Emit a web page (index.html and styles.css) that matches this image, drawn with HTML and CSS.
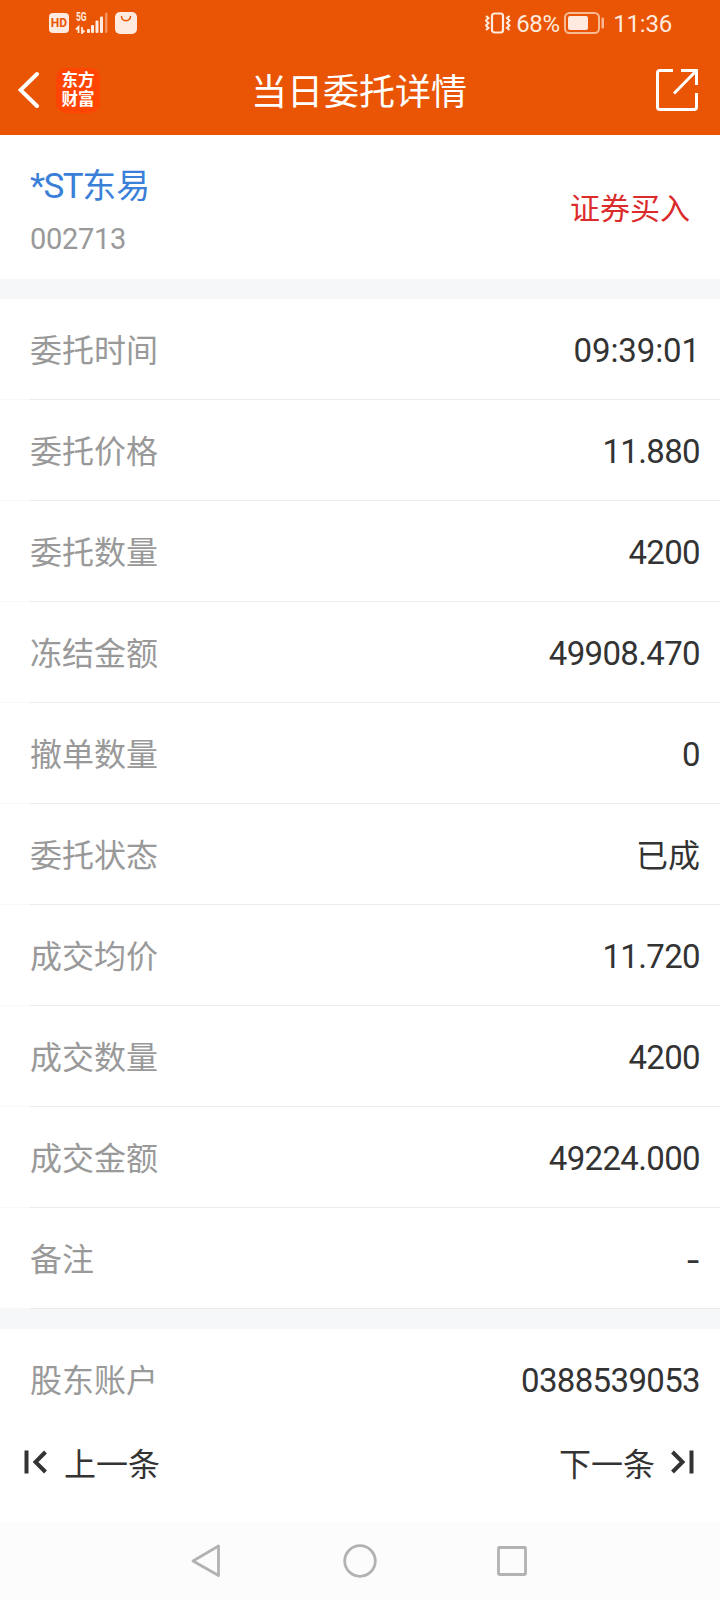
FILE: index.html
```html
<!DOCTYPE html>
<html lang="zh-CN">
  <head>
    <meta charset="UTF-8" />
    <meta name="viewport" content="width=device-width, initial-scale=1.0" />
    <title>当日委托详情</title>
    <link rel="stylesheet" href="styles.css">
  </head>

  <body>
    <header class="header">
      <div class="status-bar">
        <div class="status-left">
          <span class="hd">HD</span>
          <div class="signal">
            <span class="net">5G</span>
            <svg width="34" height="22" viewBox="0 0 34 22">
              <g fill="none" stroke="#ffeadf" stroke-width="1.800">
                <path d="M1 17.500L3.500 15V21M7 15V21L9.500 18.500" />
              </g>
              <g fill="#ffeadf">
                <rect x="12" y="17" width="3" height="4" rx="1" />
                <rect x="16" y="13" width="3" height="8" rx="1" />
                <rect x="20.500" y="8.500" width="3" height="12.500" rx="1" />
                <rect x="25" y="4.500" width="3" height="16.500" rx="1" />
                <rect x="30" y="0.500" width="2.500" height="20.500" rx="1" opacity="0.4" />
              </g>
            </svg>
          </div>
          <svg class="bag" width="22" height="22" viewBox="0 0 22 22">
            <rect width="22" height="22" rx="5" fill="#ffeadf" />
            <path d="M6.500 4.500C7 10 15 10 15.500 4.500" fill="none" stroke="#e95504" stroke-width="1.500" stroke-linecap="round" />
          </svg>
        </div>
        <div class="status-right">
          <svg width="26" height="22" viewBox="0 0 26 22">
            <g fill="none" stroke="#ffeadf">
              <rect x="7" y="1.500" width="11" height="19" rx="2.500" stroke-width="2.200" />
              <path d="M1 4L3.500 6L1 8.500L3.500 11L1 13.500L3.500 16L1 18M24.500 4L22 6L24.500 8.500L22 11L24.500 13.500L22 16L24.500 18" stroke-width="2" />
            </g>
          </svg>
          <span class="percent">68%</span>
          <svg class="battery" width="41" height="22" viewBox="0 0 41 22">
            <rect x="1" y="1" width="34" height="20" rx="4.500" fill="none" stroke="#f8b995" stroke-width="2" />
            <rect x="4" y="4" width="20" height="14" rx="2" fill="#ffeadf" />
            <rect x="37.500" y="5.500" width="2.500" height="11" rx="1.200" fill="#f8b995" />
          </svg>
          <span class="clock">11:36</span>
        </div>
      </div>
      <div class="nav-bar">
        <div class="nav-left">
          <svg width="22" height="38" viewBox="0 0 22 38">
            <path d="M19 3L2.500 19L19 35" fill="none" stroke="#fff" stroke-width="4" stroke-linecap="round" />
          </svg>
          <div class="logo"><span>东方</span><span>财富</span></div>
        </div>
        <h1 class="title">当日委托详情</h1>
        <svg class="share" width="42" height="42" viewBox="0 0 42 42">
          <g fill="none" stroke="#fff" stroke-width="3">
            <path d="M17 1.500H4Q1.500 1.500 1.500 4V38Q1.500 40.500 4 40.500H38Q40.500 40.500 40.500 38V24" />
            <path d="M25 1.500H40.500V16M40 2L18 24.500" />
          </g>
        </svg>
      </div>
    </header>

    <section class="stock">
      <div>
        <div class="stock-name">*ST<span>东易</span></div>
        <div class="stock-code">002713</div>
      </div>
      <div class="stock-type">证券买入</div>
    </section>

    <section class="details">
      <div class="row"><span class="label">委托时间</span><span class="value time">09:39:01</span></div>
      <div class="row"><span class="label">委托价格</span><span class="value">11.880</span></div>
      <div class="row"><span class="label">委托数量</span><span class="value">4200</span></div>
      <div class="row"><span class="label">冻结金额</span><span class="value">49908.470</span></div>
      <div class="row"><span class="label">撤单数量</span><span class="value">0</span></div>
      <div class="row"><span class="label">委托状态</span><span class="value text">已成</span></div>
      <div class="row"><span class="label">成交均价</span><span class="value">11.720</span></div>
      <div class="row"><span class="label">成交数量</span><span class="value">4200</span></div>
      <div class="row"><span class="label">成交金额</span><span class="value">49224.000</span></div>
      <div class="row"><span class="label">备注</span><span class="value empty">-</span></div>
    </section>

    <section class="account">
      <div class="row"><span class="label">股东账户</span><span class="value">0388539053</span></div>
    </section>

    <div class="pager">
      <div class="pager-item">
        <svg width="24" height="26" viewBox="0 0 24 26">
          <path d="M2.500 1.500V24.500M21.500 3L11.500 13L21.500 23" fill="none" stroke="#333" stroke-width="4" />
        </svg>
        <span>上一条</span>
      </div>
      <div class="pager-item">
        <span>下一条</span>
        <svg width="24" height="26" viewBox="0 0 24 26">
          <path d="M20.500 1.500V24.500M1.500 3L11.500 13L1.500 23" fill="none" stroke="#333" stroke-width="4" />
        </svg>
      </div>
    </div>

    <footer class="system-nav">
      <svg width="34" height="34" viewBox="0 0 34 34">
        <path d="M27.500 2L27.500 31.500L2 17Z" />
      </svg>
      <svg width="34" height="34" viewBox="0 0 34 34">
        <circle cx="17" cy="17" r="15.300" />
      </svg>
      <svg width="34" height="34" viewBox="0 0 34 34">
        <rect x="3.500" y="3.500" width="27" height="27" rx="1" />
      </svg>
    </footer>
  </body>
</html>
```

FILE: styles.css
```css
* {
  box-sizing: border-box;
}

body {
  margin: 0;
  width: 720px;
  height: 1600px;
  display: flex;
  flex-direction: column;
  overflow: hidden;
  background-color: #fff;
  color: #333;
  font-family: Roboto, "Noto Sans CJK SC", sans-serif;
}

svg {
  display: block;
  flex-shrink: 0;
}

/* header */
.header {
  height: 135px;
  background-color: #e95504;
  color: #fff;
}

.status-bar {
  height: 46px;
  padding: 0 48px 0 49px;
  display: flex;
  align-items: center;
  justify-content: space-between;
  color: #ffeadf;
}

.status-left,
.status-right {
  display: flex;
  align-items: center;
}

.hd {
  width: 20px;
  height: 20px;
  border-radius: 4px;
  background-color: #ffeadf;
  color: #e95504;
  font-size: 12px;
  font-weight: bold;
  line-height: 20px;
  text-align: center;
}

.signal {
  position: relative;
  margin-left: 6px;
}

.net {
  position: absolute;
  top: -1px;
  left: 1px;
  font-size: 12px;
  font-weight: bold;
  line-height: 12px;
  transform: scaleX(0.7);
  transform-origin: left;
}

.bag {
  margin-left: 6px;
}

.percent {
  margin-left: 5px;
  width: 48px;
  padding-top: 1px;
  font-size: 24px;
  letter-spacing: -0.4px;
}

.clock {
  margin-left: 8px;
  padding-top: 1px;
  font-size: 24px;
  letter-spacing: -0.2px;
}

.nav-bar {
  height: 88px;
  padding: 0 22px 0 18px;
  display: grid;
  grid-template-columns: 1fr auto 1fr;
  align-items: center;
}

.nav-left {
  display: flex;
  align-items: center;
  gap: 16px;
}

.logo {
  width: 44px;
  height: 45px;
  border-radius: 10px;
  background-color: #ff4500;
  display: flex;
  flex-direction: column;
  align-items: center;
  justify-content: center;
  font-size: 16.5px;
  font-weight: bold;
  line-height: 19px;
}

.title {
  margin: 0;
  padding: 5px 0 0 2px;
  font-size: 36px;
  font-weight: 400;
  line-height: 50px;
}

.share {
  justify-self: end;
}

/* stock */
.stock {
  height: 144px;
  padding: 0 30px;
  display: flex;
  align-items: center;
  justify-content: space-between;
}

.stock-name {
  padding-top: 5px;
  font-size: 35px;
  line-height: 50px;
  letter-spacing: -1.5px;
  color: #3a80d9;
}

.stock-name span {
  font-size: 34px;
  letter-spacing: 0;
}

.stock-code {
  margin-top: 7px;
  font-size: 29px;
  line-height: 40px;
  letter-spacing: -0.3px;
  color: #999;
}

.stock-type {
  padding-bottom: 2px;
  font-size: 30px;
  color: #db2b2b;
}

/* rows */
.details {
  border-top: 20px solid #f6f7f9;
}

.row {
  height: 101px;
  padding: 0 20px 0 30px;
  display: flex;
  align-items: center;
  justify-content: space-between;
  background: linear-gradient(90deg, #f8f8f8 30px, #ebebeb 30px) 0 100% / 100% 1px no-repeat;
}

.label {
  padding-bottom: 4px;
  font-size: 32px;
  color: #999;
}

.value {
  padding-top: 2px;
  font-size: 33px;
  letter-spacing: -0.65px;
}

.value.time {
  letter-spacing: -0.1px;
}

.value.text {
  padding: 0 0 4px;
  font-size: 32px;
  letter-spacing: 0;
}

.value.empty {
  font-family: Inter, sans-serif;
}

.account {
  height: 97px;
  border-top: 20px solid #f6f7f9;
  overflow: hidden;
}

.account .row {
  background: none;
}

/* pager */
.pager {
  flex: 1;
  padding: 0 25px 4px 24px;
  display: flex;
  align-items: center;
  justify-content: space-between;
  font-size: 32px;
}

.pager span {
  padding-bottom: 1px;
}

.pager-item {
  display: flex;
  align-items: center;
  gap: 16px;
}

.system-nav {
  height: 78px;
  display: flex;
  align-items: center;
  justify-content: center;
  gap: 118px;
  background-color: #fcfcfc;
}

.system-nav svg {
  fill: none;
  stroke: #b2b2b2;
  stroke-width: 2.8;
  stroke-linejoin: round;
}
```
